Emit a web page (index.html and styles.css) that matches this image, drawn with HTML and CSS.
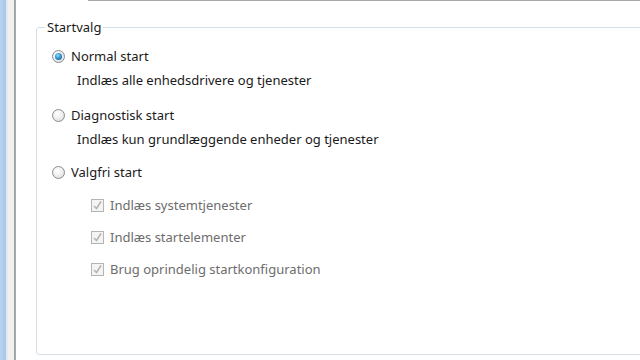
FILE: index.html
```html
<!DOCTYPE html>
<html>
	<head>
		<title>Systemkonfiguration</title>
		<link rel="stylesheet" href="styles.css">
	</head>
	<body>
		<div class="side-strip"></div>
		<div class="main">
			<div class="top-line"></div>
			<div class="group">
				<div class="legend">Startvalg</div>

				<div class="option first-option">
					<span class="radio is-checked"></span>
					<span>Normal start</span>
				</div>
				<p class="description">Indlæs alle enhedsdrivere og tjenester</p>

				<div class="option">
					<span class="radio"></span>
					<span>Diagnostisk start</span>
				</div>
				<p class="description">Indlæs kun grundlæggende enheder og tjenester</p>

				<div class="option last-option">
					<span class="radio"></span>
					<span>Valgfri start</span>
				</div>

				<div class="check-list">
					<div class="check-row">
						<span class="checkbox">
							<svg width="11" height="11" viewBox="0 0 11 11"><path d="M2 6 L4.5 8.5 L9 1.5" fill="none" stroke="#b4b4b4" stroke-width="1.6"/></svg>
						</span>
						<span>Indlæs systemtjenester</span>
					</div>
					<div class="check-row">
						<span class="checkbox">
							<svg width="11" height="11" viewBox="0 0 11 11"><path d="M2 6 L4.5 8.5 L9 1.5" fill="none" stroke="#b4b4b4" stroke-width="1.6"/></svg>
						</span>
						<span>Indlæs startelementer</span>
					</div>
					<div class="check-row">
						<span class="checkbox">
							<svg width="11" height="11" viewBox="0 0 11 11"><path d="M2 6 L4.5 8.5 L9 1.5" fill="none" stroke="#b4b4b4" stroke-width="1.6"/></svg>
						</span>
						<span>Brug oprindelig startkonfiguration</span>
					</div>
				</div>
			</div>
		</div>
	</body>
</html>
```
FILE: styles.css
```css
body{
	margin: 0;
	height: 360px;
	overflow: hidden;
	display: flex;
	background-color: white;
	font-family: "Noto Sans", sans-serif;
	font-size: 13px;
	color: #1a1a1a;
}
.side-strip{
	width: 16px;
	flex-shrink: 0;
	background: linear-gradient(to right,
		#b7d3ef 0px, #a6c6e8 6px,
		#e4e9ef 6px, #e4e9ef 8px,
		#f0f0f0 8px, #f0f0f0 14px,
		#9a9a9a 14px, #b0b0b0 16px);
}
.main{
	flex: 1;
	display: flex;
	flex-direction: column;
}
.top-line{
	margin-left: 72px;
	height: 1px;
	background-color: #a9a9a9;
}
.group{
	margin: 26px -10px 0 20px;
	height: 326px;
	border: 1px solid #d5dfe5;
	border-radius: 3px;
}
.legend{
	width: fit-content;
	margin: -9px 0 0 8px;
	padding: 0 2px;
	line-height: 16px;
	background-color: white;
}
.option{
	display: flex;
	align-items: center;
	gap: 6px;
	margin: 19px 0 0 15px;
	line-height: 16px;
}
.first-option{
	margin-top: 13px;
}
.last-option{
	margin-top: 17px;
}
.description{
	margin: 8px 0 0 40px;
	line-height: 16px;
}
.radio{
	position: relative;
	width: 11px;
	height: 11px;
	border: 1px solid #8a8b8c;
	border-radius: 50%;
	background: radial-gradient(circle at 40% 35%, #ffffff 0%, #f2f2f2 40%, #d6d6d6 100%);
}
.radio.is-checked::after{
	content: "";
	position: absolute;
	left: 2px;
	top: 2px;
	width: 7px;
	height: 7px;
	border-radius: 50%;
	background: radial-gradient(circle at 40% 35%, #8fdcfb 0%, #2b8fd0 50%, #0d4f86 100%);
}
.check-list{
	display: flex;
	flex-direction: column;
	gap: 16px;
	margin: 17px 0 0 54px;
	color: #6d6d6d;
}
.check-row{
	display: flex;
	align-items: center;
	gap: 6px;
	line-height: 16px;
}
.checkbox{
	display: flex;
	align-items: center;
	justify-content: center;
	width: 11px;
	height: 11px;
	border: 1px solid #b4b4b4;
	background-color: #f4f4f4;
}
```
